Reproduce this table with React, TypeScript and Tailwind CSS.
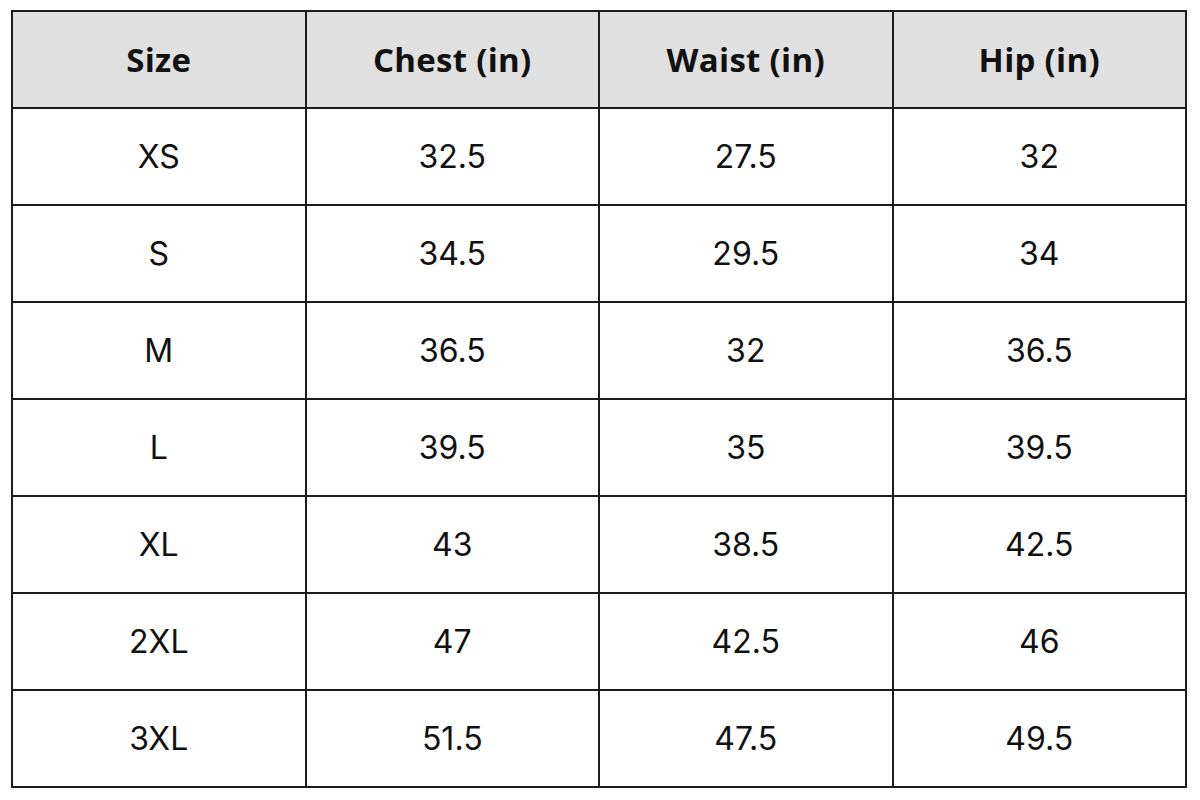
const headers = ["Size", "Chest (in)", "Waist (in)", "Hip (in)"]

const rows = [
    ["XS", "32.5", "27.5", "32"],
    ["S", "34.5", "29.5", "34"],
    ["M", "36.5", "32", "36.5"],
    ["L", "39.5", "35", "39.5"],
    ["XL", "43", "38.5", "42.5"],
    ["2XL", "47", "42.5", "46"],
    ["3XL", "51.5", "47.5", "49.5"],
]

export default function App() {
    return (
        <div className="w-[1200px] h-[800px] bg-white pt-[10px] pl-[11px]">
            <div className="w-[1176px] grid grid-cols-4 border-l-2 border-t-2 border-[#1c1c1c]">
                {headers.map((h) => (
                    <div
                        key={h}
                        className="h-[97px] flex items-center justify-center bg-[#e0e0e0] border-r-2 border-b-2 border-[#1c1c1c] text-[33px] font-bold tracking-[0.3px] text-[#111]"
                        style={{ fontFamily: "'Open Sans', Lato, sans-serif" }}
                    >
                        {h}
                    </div>
                ))}
                {rows.map((r) =>
                    r.map((c, i) => (
                        <div
                            key={r[0] + i}
                            className="h-[97px] flex items-center justify-center bg-white border-r-2 border-b-2 border-[#1c1c1c] text-[32px] text-[#111]"
                            style={{ fontFamily: "Inter, Roboto, sans-serif" }}
                        >
                            {c}
                        </div>
                    ))
                )}
            </div>
        </div>
    )
}
